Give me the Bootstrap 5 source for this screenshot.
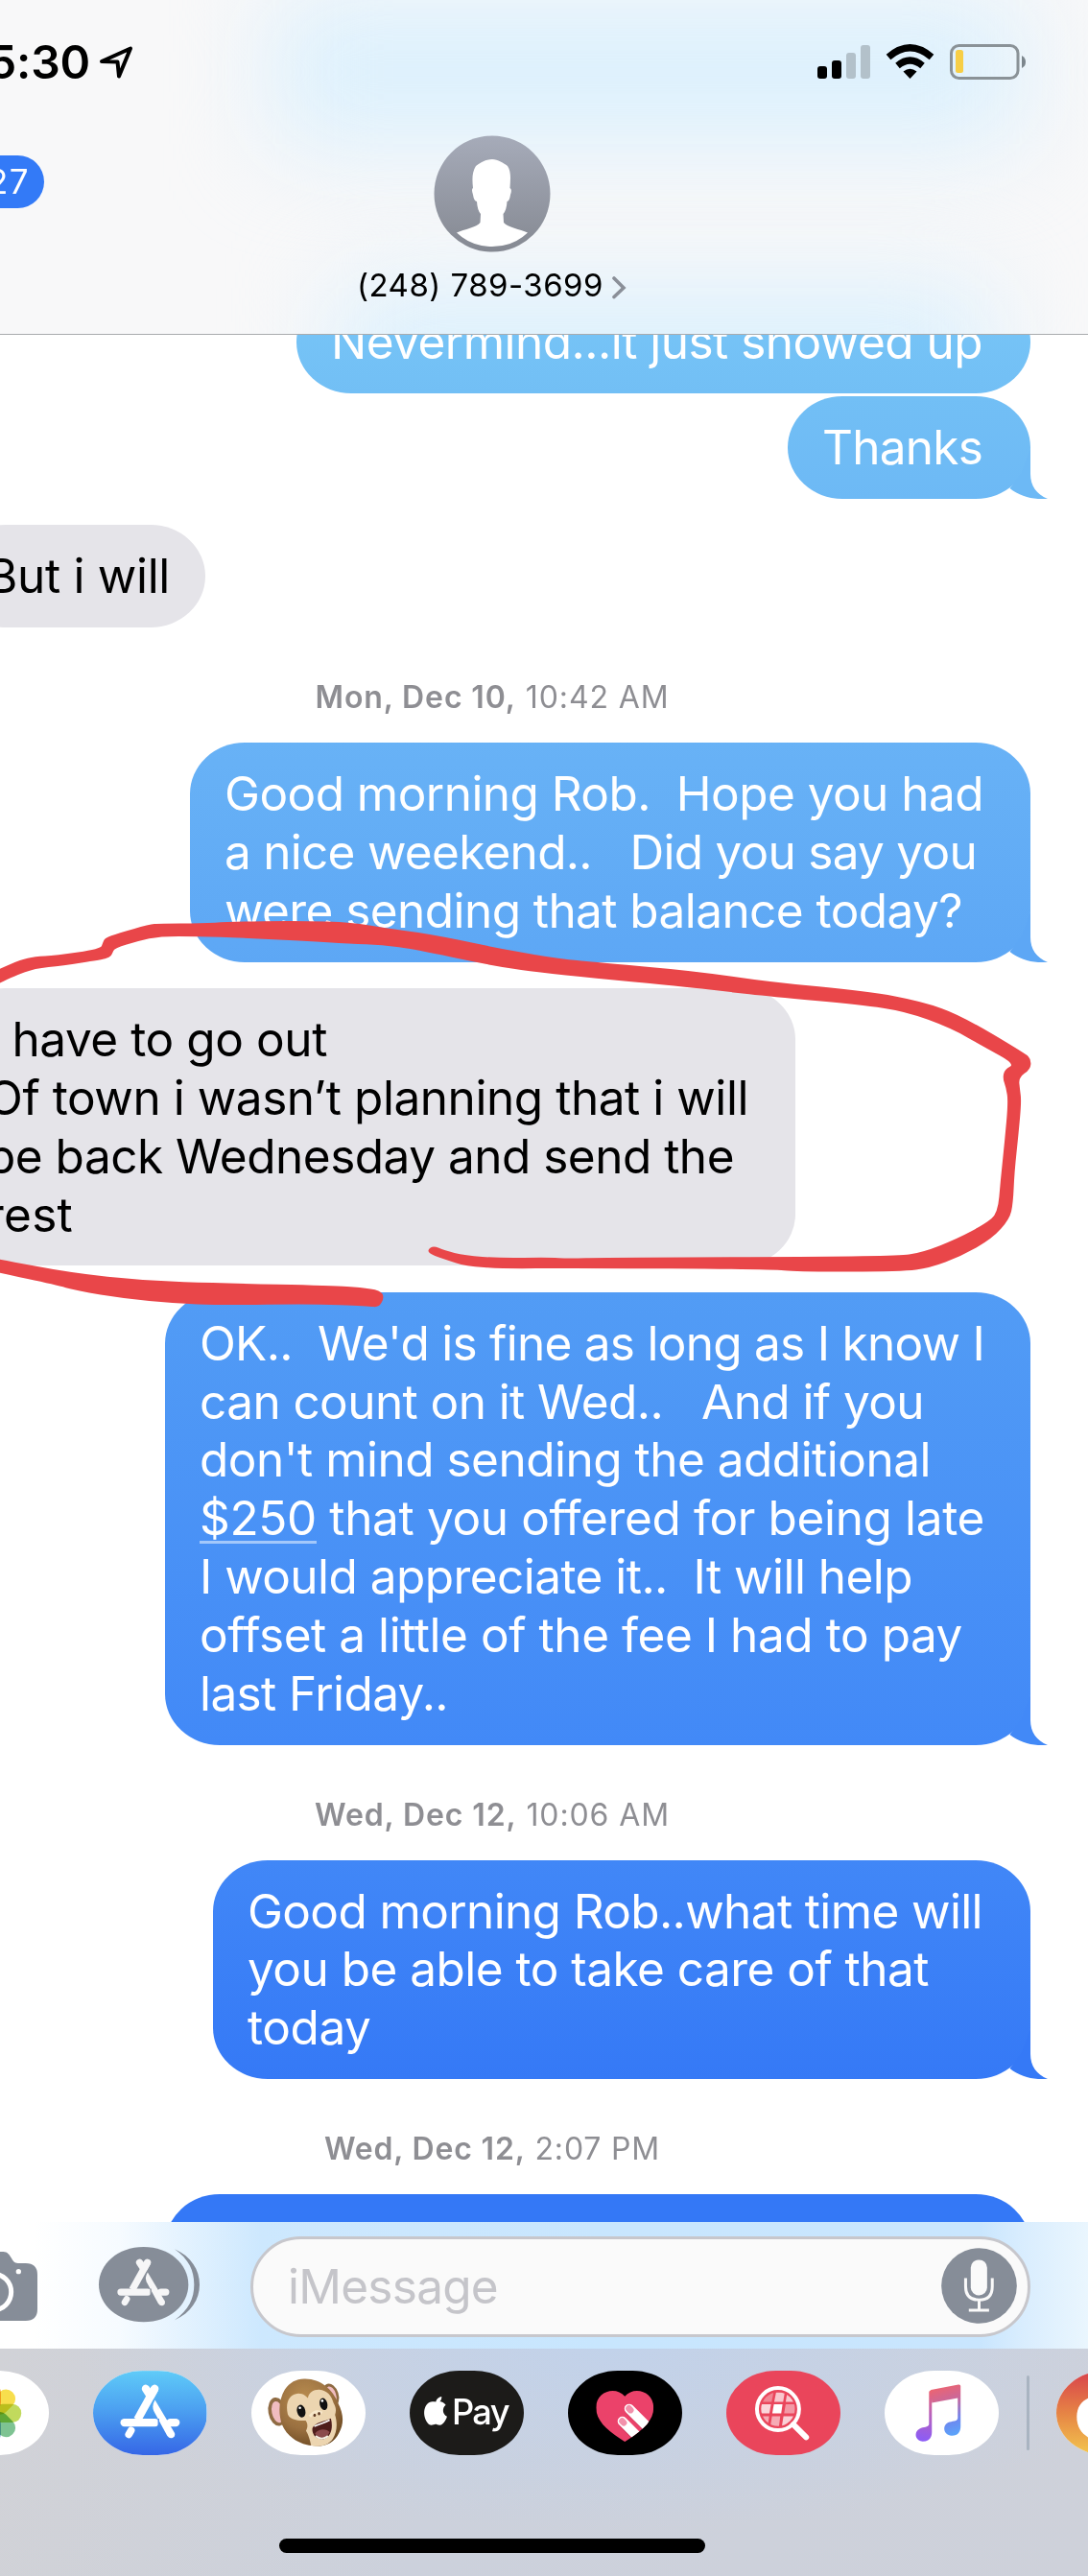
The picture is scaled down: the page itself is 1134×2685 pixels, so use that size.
<!DOCTYPE html>
<html lang="en">
<head>
  <meta charset="UTF-8">
  <meta name="viewport" content="width=device-width, initial-scale=1.0">
  <title>Messages</title>
  <!-- Bootstrap CSS -->
  <link href="https://cdn.jsdelivr.net/npm/bootstrap@5.3.0/dist/css/bootstrap.min.css" rel="stylesheet">
  <style>
    body {
      width: 1134px;
      height: 2685px;
      font-family: Inter, "Liberation Sans", sans-serif;
      color: #000;
      background: #fff;
    }
    svg { display: block; flex: none; }
    .fit { display: inline-block; white-space: pre; }

    /* header */
    .top-bar {
      height: 349px;
      background: #f8f8f9;
      border-bottom: 1px solid #a9abae;
    }
    .glow {
      left: 285px;
      width: 780px;
      height: 150px;
      background: #dbf0fd;
      filter: blur(52px);
    }
    .glow-top { top: 0; }
    .glow-bottom { top: 300px; left: 350px; width: 680px; }
    .status-row { height: 130px; padding-right: 65px; }
    .clock {
      margin-left: -13px;
      font-size: 48px;
      font-weight: 600;
      line-height: 130px;
    }
    .back-count {
      margin-top: 32px;
      margin-left: -60px;
      width: 106px;
      height: 55px;
      padding-left: 47px;
      border-radius: 28px;
      background: #337af7;
      color: #fff;
      font-size: 35px;
      line-height: 55px;
    }
    .contact { margin-left: 312px; margin-top: 11px; width: 310px; }
    .contact-name { font-size: 33px; line-height: 40px; margin-top: 14px; }

    /* thread */
    .thread { height: 1967px; }
    .bubble {
      font-size: 49.5px;
      line-height: 60.8px;
      padding: 23.1px 0 23.1px 36px;
      border-radius: 57px / 53.4px;
      margin-bottom: 27.3px;
    }
    .bubble .fit { display: block; width: max-content; }
    .sent {
      color: #fff;
      margin-right: 60.5px;
      background: linear-gradient(var(--from), var(--to));
    }
    .received {
      background: #e5e4e9;
      margin-left: -51px;
      padding-left: 37px;
    }
    .tail { right: -18px; bottom: 0; fill: var(--to); }
    .money { border-bottom: 3px solid #a3c8fb; display: inline-block; line-height: 48px; }
    .stamp {
      width: 1026px;
      margin: 25.7px 0 27px;
      font-size: 32px;
      line-height: 40px;
      color: #8e8e93;
    }
    .w252 { width: 252.5px; }
    .w265 { width: 265px; }
    .w765 { width: 764.5px; }
    .w852 { width: 851.5px; }
    .w876 { width: 875.5px; }
    .w880 { width: 880px; }
    .w902 { width: 901.5px; }
    .scribble { left: 0; top: 740px; z-index: 5; }

    /* composer */
    .composer {
      height: 132px;
      padding-top: 3px;
      background: linear-gradient(90deg, #fff 3%, #f6fbff 11%, #cde8fe 24%, #c8e6fe 55%, #c9e6fe 90%, #d9edfe 94%, #eaf6fe 100%);
    }
    .camera { margin-left: -91px; }
    .entry {
      margin-left: 53px;
      width: 813px;
      height: 105px;
      padding: 0 11px 0 36px;
      border: 3px solid #c7c7cc;
      border-radius: 53px;
      background: #fafafa;
      color: #c5c5ca;
      font-size: 49.5px;
    }
    .mic { margin-top: -3px; }

    /* app drawer */
    .drawer {
      height: 237px;
      background:
        radial-gradient(ellipse 560px 190px at 640px 0, #c2d2ea, rgba(194, 210, 234, 0)),
        linear-gradient(100deg, #d1d2d7, #ccd1dc 40%, #ced1da);
    }
    .app-row { margin-left: -68px; padding-top: 22.5px; gap: 46.5px; }
    .app-pill {
      width: 118.5px;
      height: 88.5px;
      flex: none;
      overflow: hidden;
      border-radius: 52px / 44.2px;
      background: #fff;
    }
    .divider {
      width: 3px;
      height: 78px;
      flex: none;
      margin: 0 -18.5px 0 -17px;
      border-radius: 2px;
      background: #a9b4c1;
    }
    .home-bar {
      margin: 87px 0 0 291px;
      width: 444px;
      height: 15px;
      border-radius: 8px;
      background: #000;
    }
    .bg-pay { background: #1c1b19; }
    .bg-find { background: #ea455b; }
  </style>
</head>
<body class="position-relative overflow-hidden">
  <!-- Shared glyphs -->
  <svg width="0" height="0" class="position-absolute">
    <defs>
      <symbol id="storeGlyph" viewBox="370 550 200 180">
        <g stroke="#fff" stroke-linecap="round" fill="none" stroke-width="25">
          <path d="M483 568L429 665" stroke-linecap="butt"/>
          <path d="M483 568L470 591"/>
          <path d="M455 568L468 588"/>
          <path d="M388 674H484"/>
          <path d="M532 674H549"/>
          <path d="M409 699L402 711" stroke-width="23"/>
        </g>
        <path d="M484 603L545 706Q549 718 539 722Q529 725 522 715L480 638Q473 620 484 603Z" fill="#fff"/>
        <path d="M495 662V688" stroke="var(--cut)" stroke-width="4"/>
      </symbol>
      <symbol id="tailShape" viewBox="0 0 76 60">
        <path d="M58 6V34C58 46 64 55 76 60C62 61 48 58 36.500 49L49 33L56.500 12Z"/>
      </symbol>
      <linearGradient id="avatarFill" x2="0" y2="1"><stop stop-color="#a6abb9"/><stop offset="1" stop-color="#858992"/></linearGradient>
      <linearGradient id="storeFill" x2="0" y2="1"><stop stop-color="#5fcbf8"/><stop offset=".5" stop-color="#4a9cf0"/><stop offset="1" stop-color="#3566e6"/></linearGradient>
      <linearGradient id="ringFill" x2="0" y2="1"><stop stop-color="#d8414b"/><stop offset=".5" stop-color="#e68445"/><stop offset="1" stop-color="#f3c74e"/></linearGradient>
      <linearGradient id="noteFill" gradientUnits="userSpaceOnUse" x1="640" y1="560" x2="690" y2="720"><stop stop-color="#f0646c"/><stop offset=".35" stop-color="#c8689c"/><stop offset=".7" stop-color="#6f86ee"/><stop offset="1" stop-color="#5aa6fb"/></linearGradient>
      <linearGradient id="noteLeft" gradientUnits="userSpaceOnUse" x1="632" y1="570" x2="600" y2="730"><stop stop-color="#f0646c"/><stop offset=".45" stop-color="#bb62b8"/><stop offset="1" stop-color="#8b5cf6"/></linearGradient>
      <radialGradient id="furFill" cx=".4" cy=".3" r=".75"><stop stop-color="#b98d4f"/><stop offset=".6" stop-color="#9a7040"/><stop offset="1" stop-color="#6d4a22"/></radialGradient>
      <clipPath id="heartClip"><path d="M753 734C700 700 663 670 663 627C663 575 725 558 753 592C781 558 843 575 843 627C843 670 806 700 753 734Z"/></clipPath>
      <clipPath id="lensClip"><circle cx="152" cy="632" r="53"/></clipPath>
    </defs>
  </svg>

  <!-- Header -->
  <header class="top-bar position-relative overflow-hidden">
    <div class="glow glow-top position-absolute"></div>
    <div class="glow glow-bottom position-absolute"></div>
    <div class="position-relative">
      <div class="status-row d-flex align-items-center">
        <div class="clock"><span class="fit" data-w="107">5:30</span></div>
        <svg class="ms-2" width="38" height="36" viewBox="0 0 38 36"><path d="M4 17L34 3.500L22 32.500L20.500 17.500Z" fill="none" stroke="#000" stroke-width="4" stroke-linejoin="round"/></svg>
        <svg class="ms-auto" width="219" height="38" viewBox="850 46 219 38">
          <rect x="852" y="69" width="10" height="13" rx="3"/>
          <rect x="867" y="63" width="10" height="19" rx="3"/>
          <g fill="#b3c1ca"><rect x="882" y="55" width="10" height="27" rx="3"/><rect x="897" y="47" width="10" height="35" rx="3"/></g>
          <g fill="none" stroke="#000" stroke-width="7">
            <path d="M926 59.500Q948.500 40 971 59.500"/>
            <path d="M935.500 68.500Q948.500 57.500 961.500 68.500"/>
          </g>
          <path d="M941.500 74.500Q948.500 69 955.500 74.500L948.500 82Z"/>
          <rect x="991.500" y="47.500" width="69.500" height="34" rx="8" fill="none" stroke="#8a9297" stroke-width="3"/>
          <rect x="996" y="52" width="8" height="24" rx="2.500" fill="#f7ce46"/>
          <path d="M1065 58Q1069 60 1069 64.500Q1069 69 1065 71Z" fill="#7c868c"/>
        </svg>
      </div>
      <div class="d-flex align-items-start">
        <div class="back-count"><span class="fit" data-w="44">27</span></div>
        <div class="contact d-flex flex-column align-items-center">
          <svg width="122" height="122" viewBox="0 0 122 122">
            <circle cx="61" cy="61" r="60.500" fill="url(#avatarFill)"/>
            <path d="M61 25C67 25 73 29 77 32C81 38 80 46 79.500 55Q82 56 80 62Q79 69 76.500 69Q76 78 72.500 82L73 91C77 96 90 98 98 101.500Q83 116 61 116Q39 116 24 101.500C32 98 45 96 48.500 91L49 82Q45.500 78 45 69Q42 69 41 62Q39 56 41 55C40 46 40 38 44 32C48 29 54 25 61 25Z" fill="#fff"/>
          </svg>
          <div class="contact-name d-flex align-items-center">
            <span class="fit" data-w="257">(248) 789-3699</span>
            <svg class="ms-2 mt-1" width="17" height="25" viewBox="0 0 17 25"><path d="M3 3L13 13L3 22.500" fill="none" stroke="#8a8f98" stroke-width="3.600" stroke-linecap="round"/></svg>
          </div>
        </div>
      </div>
    </div>
  </header>

  <!-- Conversation -->
  <main class="thread d-flex flex-column overflow-hidden">
    <div class="bubble sent w765 align-self-end" style="--from:#78c6f7;--to:#72bff5;margin-top:-46px;margin-bottom:3px"><span class="fit" data-w="679">Nevermind...it just showed up</span></div>
    <div class="bubble sent w252 align-self-end position-relative" style="--from:#72bff5;--to:#6db9f5">
      <span class="fit" data-w="167">Thanks</span>
      <svg class="tail position-absolute" width="76" height="60"><use href="#tailShape"/></svg>
    </div>
    <div class="bubble received w265 align-self-start"><span class="fit" data-w="191">But i will</span></div>

    <div class="stamp text-center"><span class="fit" data-w="369"><span class="fw-semibold">Mon, Dec 10,</span> 10:42 AM</span></div>

    <div class="bubble sent w876 align-self-end position-relative" style="--from:#68b2f6;--to:#5da7f5">
      <span class="fit" data-w="791">Good morning Rob.  Hope you had</span>
      <span class="fit" data-w="784">a nice weekend..   Did you say you</span>
      <span class="fit" data-w="769">were sending that balance today?</span>
      <svg class="tail position-absolute" width="76" height="60"><use href="#tailShape"/></svg>
    </div>
    <div class="bubble received w880 align-self-start">
      <span class="fit" data-w="355">I have to go out</span>
      <span class="fit" data-w="794">Of town i wasn’t planning that i will</span>
      <span class="fit" data-w="779">be back Wednesday and send the</span>
      <span class="fit" data-w="90">rest</span>
    </div>
    <div class="bubble sent w902 align-self-end position-relative" style="--from:#529cf5;--to:#4289f7">
      <span class="fit" data-w="818">OK..  We'd is fine as long as I know I</span>
      <span class="fit" data-w="755">can count on it Wed..   And if you</span>
      <span class="fit" data-w="762">don't mind sending the additional</span>
      <span class="fit" data-w="818"><span class="money">$250</span> that you offered for being late</span>
      <span class="fit" data-w="743">I would appreciate it..  It will help</span>
      <span class="fit" data-w="795">offset a little of the fee I had to pay</span>
      <span class="fit" data-w="259">last Friday..</span>
      <svg class="tail position-absolute" width="76" height="60"><use href="#tailShape"/></svg>
    </div>

    <div class="stamp text-center"><span class="fit" data-w="370"><span class="fw-semibold">Wed, Dec 12,</span> 10:06 AM</span></div>

    <div class="bubble sent w852 align-self-end position-relative" style="--from:#4187f7;--to:#3579f6">
      <span class="fit" data-w="766">Good morning Rob..what time will</span>
      <span class="fit" data-w="710">you be able to take care of that</span>
      <span class="fit" data-w="128.5">today</span>
      <svg class="tail position-absolute" width="76" height="60"><use href="#tailShape"/></svg>
    </div>

    <div class="stamp text-center"><span class="fit" data-w="350"><span class="fw-semibold">Wed, Dec 12,</span> 2:07 PM</span></div>

    <div class="bubble sent w902 align-self-end flex-shrink-0" style="--from:#3478f6;--to:#3478f6">&nbsp;</div>
  </main>

  <!-- Composer -->
  <div class="composer d-flex align-items-center">
    <svg class="camera" width="130" height="73" viewBox="-273 138 390 219">
      <path d="M-60 138H10C36 138 34 174 56 174H80Q117 174 117 210V318Q117 354 80 354H-120Q-160 354 -160 318V210Q-160 174 -120 174H-105C-84 174 -84 138 -60 138Z" fill="#868d98"/>
      <circle cx="-22" cy="264" r="57" fill="none" stroke="#fff" stroke-width="15"/>
      <circle cx="58" cy="200" r="8" fill="#fff"/>
    </svg>
    <svg class="ms-5 mb-1" style="--cut:#868d98" width="121" height="79" viewBox="261 128 363 237">
      <path d="M449 128C530 128 589 182 589 246C589 310 530 363 449 363C368 363 309 310 309 246C309 182 368 128 449 128Z" fill="#868d98"/>
      <path d="M546 135C598 158 624 200 624 246C624 292 598 334 546 357C590 325 607 290 607 246C607 202 590 166 546 135Z" fill="#868d98"/>
      <use href="#storeGlyph" x="362" y="161" width="175" height="157" opacity=".93"/>
    </svg>
    <div class="entry d-flex align-items-center justify-content-between">
      <span class="fit" data-w="219">iMessage</span>
      <svg class="mic" width="79" height="79" viewBox="664 128 236 236">
        <circle cx="782" cy="246" r="117.500" fill="#868d98"/>
        <rect x="756" y="165" width="51" height="111" rx="25" fill="#fafafa"/>
        <path d="M740 222V248Q740 290 782 290Q823 290 823 248V222M782 290V322M750 322H813" fill="none" stroke="#fafafa" stroke-width="9"/>
      </svg>
    </div>
  </div>

  <!-- App drawer -->
  <footer class="drawer">
    <div class="app-row d-flex align-items-center">
      <div class="app-pill">
        <svg width="118.5" height="88.5" viewBox="-206 512 356 265"><g id="petals" transform="translate(-28 645)"></g></svg>
      </div>
      <div class="app-pill">
        <svg style="--cut:#4488ec" width="118.5" height="88.5" viewBox="290 512 356 265">
          <rect x="290" y="512" width="356" height="265" fill="url(#storeFill)"/>
          <use href="#storeGlyph" x="370" y="550" width="200" height="180"/>
        </svg>
      </div>
      <div class="app-pill">
        <svg width="118.5" height="88.5" viewBox="785 512 356 265">
          <!-- ears -->
          <ellipse cx="866" cy="640" rx="28" ry="45" transform="rotate(-10 866 640)" fill="#8f6b43"/>
          <ellipse cx="867" cy="641" rx="18" ry="34" transform="rotate(-12 867 641)" fill="#f0bcc0"/>
          <ellipse cx="1034" cy="588" rx="24" ry="37" transform="rotate(-18 1034 588)" fill="#8f6b43"/>
          <ellipse cx="1035" cy="588" rx="15" ry="28" transform="rotate(-18 1035 588)" fill="#f0bcc0"/>
          <!-- head -->
          <path d="M950 537C1000 535 1040 570 1056 612C1076 650 1074 680 1060 705C1045 740 1010 752 975 746C930 742 895 715 880 678C868 640 872 600 890 570C905 548 925 538 950 537Z" fill="url(#furFill)"/>
          <path d="M899 648C890 610 905 585 932 583C950 583 955 592 962 597C965 580 980 570 998 571C1022 573 1036 590 1042 612C1052 628 1050 640 1047 650C1056 680 1052 705 1040 725C1025 748 995 751 972 746C968 728 964 712 956 700C962 690 962 676 955 668C935 668 905 666 899 648Z" fill="#ecd5b0"/>
          <!-- eyes and nose -->
          <ellipse cx="941" cy="638" rx="13" ry="20" transform="rotate(-14 941 638)" fill="#111"/>
          <ellipse cx="1011" cy="616" rx="12" ry="19" transform="rotate(-14 1011 616)" fill="#111"/>
          <circle cx="937" cy="628" r="4" fill="#fff"/><circle cx="1007" cy="606" r="4" fill="#fff"/>
          <path d="M968 655Q985 632 1006 644" fill="none" stroke="#f8e8cb" stroke-width="9"/>
          <ellipse cx="983" cy="651" rx="4" ry="5" fill="#5b3622"/><ellipse cx="997" cy="646" rx="4" ry="5" fill="#5b3622"/>
          <!-- mouth -->
          <path d="M976 692C985 672 1012 672 1034 661C1042 690 1034 722 1010 726C990 728 974 712 976 692Z" fill="#4e1d1b"/>
          <path d="M984 708C998 690 1022 694 1030 704C1022 724 998 728 984 708Z" fill="#8b4a4c"/>
          <path d="M982 686C1000 678 1015 674 1030 666" stroke="#fff" stroke-width="5" fill="none"/>
          <path d="M986 716Q1006 732 1025 716" stroke="#f4eee2" stroke-width="6" fill="none"/>
        </svg>
      </div>
      <div class="app-pill bg-pay">
        <svg width="118.5" height="88.5" viewBox="80 512 356 265">
          <path d="M162 609C174 605 187 609 193 619C181 628 182 648 197 655C193 669 182 683 174 682C167 681 165 679 161 679C157 679 154 682 147 682C135 682 118 651 129 625C138 605 154 608 162 609Z" fill="#fff"/>
          <path d="M180 593C181 604 173 613 162 613C161 603 170 595 180 593Z" fill="#fff"/>
          <text x="212" y="680" font-size="109" font-weight="500" textLength="182" fill="#fff">Pay</text>
        </svg>
      </div>
      <div class="app-pill bg-black">
        <svg width="118.5" height="88.5" viewBox="575 512 356 265">
          <g clip-path="url(#heartClip)">
            <rect x="660" y="560" width="190" height="180" fill="#eb426a"/>
            <g transform="rotate(-45 768 632)">
              <rect x="751" y="622" width="30" height="130" rx="15" fill="#b02b4b" opacity=".6"/>
              <rect x="753" y="615" width="30" height="130" rx="15" fill="#fff"/>
              <rect x="758" y="619" width="20" height="27" rx="10" fill="#f291ab"/>
            </g>
            <g transform="rotate(-45 746 671)">
              <rect x="729" y="662" width="30" height="130" rx="15" fill="#b02b4b" opacity=".6"/>
              <rect x="731" y="655" width="30" height="130" rx="15" fill="#fff"/>
              <rect x="736" y="659" width="20" height="27" rx="10" fill="#f291ab"/>
            </g>
          </g>
        </svg>
      </div>
      <div class="app-pill bg-find">
        <svg width="118.5" height="88.5" viewBox="-10 512 356 265">
          <g clip-path="url(#lensClip)" fill="#fff">
            <path d="M98 579H138L132 609H98Z" opacity=".35"/><path d="M146 579H173L168 609H140Z" opacity=".7"/><path d="M181 579H210V609H176Z" opacity=".7"/>
            <path d="M98 617H130L125 645H98Z" opacity=".78"/><path d="M139 617H166L162 645H134Z"/><path d="M176 617H206V645H171Z" opacity=".45"/>
            <path d="M98 654H124L120 686H98Z" opacity=".55"/><path d="M133 654H159L155 686H128Z" opacity=".55"/><path d="M169 654H206V686H164Z" opacity=".75"/>
          </g>
          <circle cx="152" cy="632" r="66" fill="none" stroke="#fff" stroke-width="12"/>
          <path d="M200 680L240 720" stroke="#fff" stroke-width="18" stroke-linecap="round"/>
        </svg>
      </div>
      <div class="app-pill">
        <svg width="118.5" height="88.5" viewBox="485 512 356 265">
          <path d="M633 612L714 597V660C712 672 696 668 684 674C664 684 670 714 694 715C714 716 723 704 723 686V560Q723 554 716 555L630 572L633 612Z" fill="url(#noteFill)"/>
          <path d="M633 572L629 573Q624 574 624 579V680C622 690 606 687 595 693C574 704 582 733 604 733C624 733 633 722 633 704Z" fill="url(#noteLeft)"/>
        </svg>
      </div>
      <div class="divider"></div>
      <div class="app-pill">
        <svg width="118.5" height="88.5" viewBox="1025 512 356 265">
          <rect x="1025" y="512" width="356" height="265" fill="url(#ringFill)"/>
          <path d="M1089 656C1089 620 1110 600 1140 592V728C1110 716 1089 694 1089 656Z" fill="#fff"/>
        </svg>
      </div>
    </div>
    <div class="home-bar"></div>
  </footer>

  <!-- Red marker drawn over the thread -->
  <svg class="scribble position-absolute" width="1134" height="640" viewBox="0 0 1568 1568" preserveAspectRatio="none" fill="#e94649">
    <path class="ink" data-points="-30,690 0,660 30,638 50,630 80,627 145,610 148,595 151,583 170,570 215,548 230,545 290,545 330,541 430,538 510,543 550,556 620,572 700,602 790,632 850,643 1000,666 1110,695 1250,718 1330,745 1385,780 1478,878 1486,892 1485,918 1468,938 1470,970 1472,1000 1468,1080 1462,1180 1460,1260 1455,1300 1430,1350 1385,1395 1340,1425 1300,1434 1150,1435 1110,1428 820,1425 725,1427 670,1420 645,1405 620,1390 616,1378 625,1368 640,1380 670,1393 720,1400 790,1398 820,1401 870,1398 1290,1396 1330,1385 1380,1350 1420,1312 1438,1285 1442,1200 1448,1100 1453,1000 1450,965 1445,940 1448,918 1463,904 1420,862 1370,812 1305,770 1240,753 1110,732 1050,720 990,707 780,672 700,650 600,612 550,600 505,597 440,590 350,582 285,578 230,578 200,590 165,608 162,622 158,632 145,638 90,653 50,660 20,680 0,697 -30,725"/>
    <path class="ink" data-points="-30,1394 0,1403 100,1437 210,1458 320,1464 480,1470 520,1475 548,1482 554,1500 546,1526 530,1522 450,1517 320,1520 250,1515 180,1503 110,1483 80,1468 0,1438 -30,1425"/>
  </svg>

  <!-- Bootstrap JS and Custom Script -->
  <script src="https://cdn.jsdelivr.net/npm/bootstrap@5.3.0/dist/js/bootstrap.bundle.min.js"></script>
  <script>
    // Space the letters so that each line takes its set width
    function fitLines() {
      document.querySelectorAll(".fit").forEach((line) => {
        line.style.letterSpacing = "0px";
        let natural = line.getBoundingClientRect().width;
        let gap = (line.dataset.w - natural) / line.textContent.length;
        line.style.letterSpacing = `${gap}px`;
      });
    }

    // Round off the marker outline by curving through the midpoints
    function drawInk(path) {
      let points = path.dataset.points.split(" ").map((p) => p.split(",").map(Number));
      let d = "";
      points.forEach((p, i) => {
        let next = points[(i + 1) % points.length];
        let mid = [(p[0] + next[0]) / 2, (p[1] + next[1]) / 2];
        d += i === 0 ? `M${mid}` : `Q${p} ${mid}`;
      });
      path.setAttribute("d", `${d}Z`);
    }

    function drawPetals() {
      let colors = ["#f3a63b", "#f7dc3f", "#bdd751", "#74bf8a", "#7fb2d8", "#8f8fd0", "#c88fc0", "#ee7f63"];
      let petals = document.getElementById("petals");
      colors.forEach((color, i) => {
        petals.innerHTML += `<rect x="-29" y="-93" width="58" height="86" rx="28" fill="${color}" opacity=".93" transform="rotate(${i * 45})" style="mix-blend-mode:multiply"/>`;
      });
    }

    fitLines();
    document.fonts.ready.then(fitLines);
    document.querySelectorAll(".ink").forEach(drawInk);
    drawPetals();
  </script>
</body>
</html>
